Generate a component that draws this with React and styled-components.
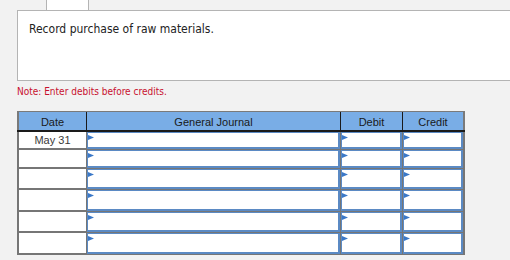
import React from "react";
import styled, { createGlobalStyle } from "styled-components";

const Global = createGlobalStyle`
  html, body { margin: 0; padding: 0; background: #f2f2f2; overflow: hidden; }
  body { width: 510px; height: 260px; }
`;

const Page = styled.div`
  padding-left: 17px;
  display: flex;
  flex-direction: column;
`;

const Tab = styled.div`
  margin-left: 29px;
  width: 41px;
  height: 10px;
  background: #fff;
  border: 1px solid #b4b4b4;
  border-top: none;
  border-bottom: none;
`;

const QuestionBox = styled.div`
  height: 71px;
  background: #fff;
  border: 1px solid #b4b4b4;
  border-right: none;
  padding: 11px 0 0 11px;
  box-sizing: border-box;
  font-family: "DejaVu Sans Condensed", "DejaVu Sans", sans-serif;
  font-stretch: condensed;
  font-size: 12px;
  color: #222;
`;

const Note = styled.div`
  margin-top: 5px;
  font-family: "DejaVu Sans Condensed", "DejaVu Sans", sans-serif;
  font-stretch: condensed;
  font-size: 10px;
  color: #c8102e;
  height: 12px;
  line-height: 12px;
`;

const COLS = "70px 254px 62px 62px";

const Journal = styled.div`
  margin-top: 13px;
  width: 448px;
  display: flex;
  flex-direction: column;
  font-family: "Liberation Sans", Arial, sans-serif;
  font-size: 11px;
`;

const HeaderRow = styled.div`
  display: grid;
  grid-template-columns: ${COLS};
  height: 21px;
  box-sizing: border-box;
  background: #79ade6;
  border-top: 1px solid #7a7a7a;
  border-bottom: 2px solid #1a1a1a;
`;

const Th = styled.div`
  display: flex;
  align-items: center;
  justify-content: center;
  padding-top: 1px;
  color: #1a1a1a;
  box-sizing: border-box;
  border-left: ${(p) => (p.$first ? "2px solid #7a7a7a" : "none")};
  border-right: ${(p) => (p.$last ? "2px solid #7a7a7a" : "1px solid #1a1a1a")};
`;

const BodyRow = styled.div`
  display: grid;
  grid-template-columns: ${COLS};
  height: ${(p) => p.$h}px;
`;

const DateCell = styled.div`
  display: flex;
  align-items: center;
  justify-content: center;
  box-sizing: border-box;
  background: #fff;
  border-left: 2px solid #767676;
  border-right: 1px solid #767676;
  border-bottom: 2px solid #767676;
  color: #3a3a3a;
`;

const EntryCell = styled.div`
  box-sizing: border-box;
  background: #767676;
  padding: 0 ${(p) => (p.$last ? 2 : 1)}px 1px 0;
  display: flex;
`;

const Input = styled.div`
  position: relative;
  flex: 1;
  box-sizing: border-box;
  background: #fff;
  border: 2px solid #5b8ac4;
  border-top-width: 1px;
  border-left-width: 1px;
`;

const Flag = styled.svg`
  position: absolute;
  left: 0;
  top: 2px;
`;

const rows = [
  { date: "May 31", h: 18 },
  { date: "", h: 19 },
  { date: "", h: 21 },
  { date: "", h: 22 },
  { date: "", h: 21 },
  { date: "", h: 22 },
];

function Entry({ last }) {
  return (
    <EntryCell $last={last}>
      <Input>
        <Flag width="6" height="5" viewBox="0 0 6 5">
          <path d="M0 0 L6 2.5 L0 5 Z" fill="#3a78c8" />
        </Flag>
      </Input>
    </EntryCell>
  );
}

export default function App() {
  return (
    <>
      <Global />
      <Page>
        <Tab />
        <QuestionBox>Record purchase of raw materials.</QuestionBox>
        <Note>Note: Enter debits before credits.</Note>
        <Journal>
          <HeaderRow>
            <Th $first>Date</Th>
            <Th>General Journal</Th>
            <Th>Debit</Th>
            <Th $last>Credit</Th>
          </HeaderRow>
          {rows.map((r, i) => (
            <BodyRow key={i} $h={r.h}>
              <DateCell>{r.date}</DateCell>
              <Entry />
              <Entry />
              <Entry last />
            </BodyRow>
          ))}
        </Journal>
      </Page>
    </>
  );
}
